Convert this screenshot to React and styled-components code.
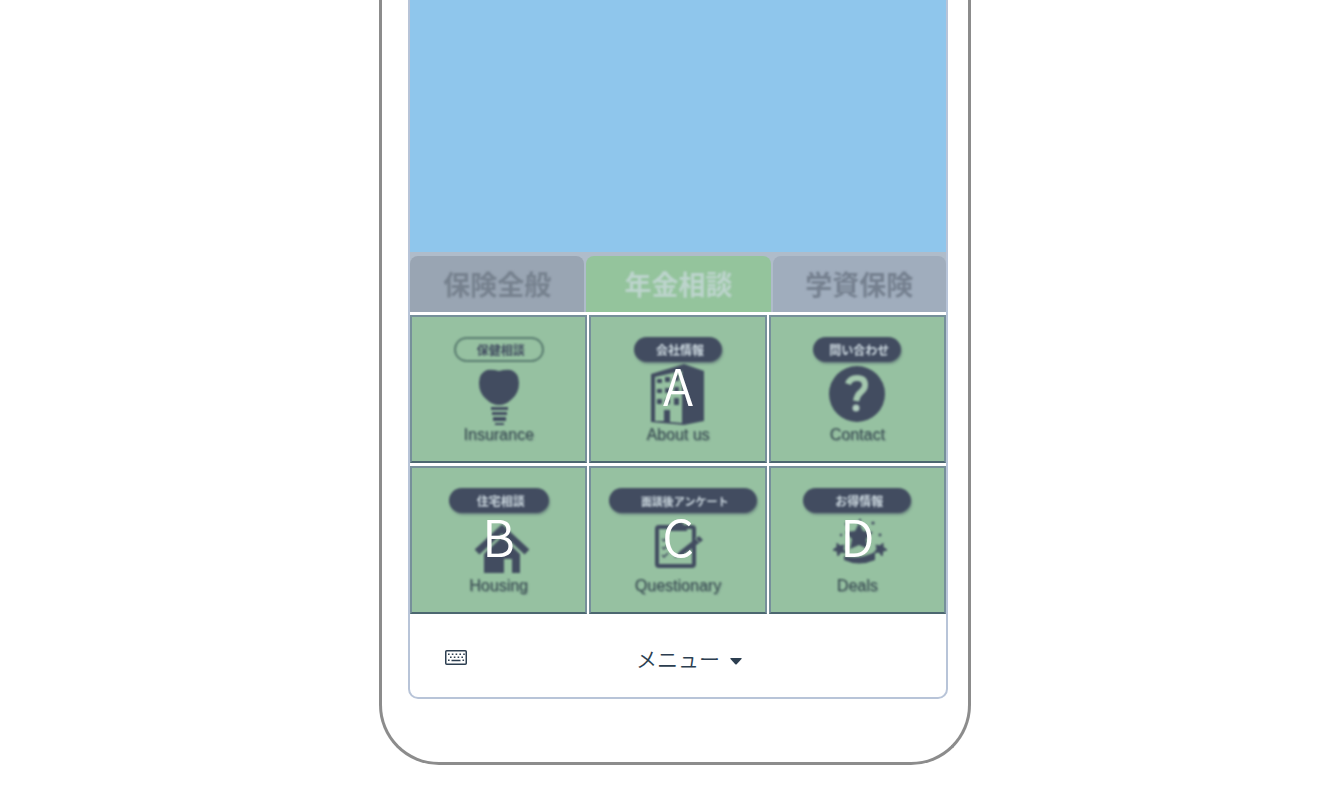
import React, { useState } from 'react';
import styled, { createGlobalStyle } from 'styled-components';

const ink = '#424c60';

const tabs = [
	{ id: 'general', label: '保険全般', bg: '#99a5b3', color: '#76818e' },
	{ id: 'pension', label: '年金相談', bg: '#94c49c', color: '#bdd4cd' },
	{ id: 'school', label: '学資保険', bg: '#a0adbd', color: '#75808f' },
];

const tiles = [
	{ id: 'insurance', tag: '保健相談', name: 'Insurance', icon: BulbIcon, width: 90, outlined: true },
	{ id: 'about', tag: '会社情報', name: 'About us', icon: BuildingIcon, width: 88, letter: 'A' },
	{ id: 'contact', tag: '問い合わせ', name: 'Contact', icon: QuestionIcon, width: 88 },
	{ id: 'housing', tag: '住宅相談', name: 'Housing', icon: HouseIcon, width: 100, letter: 'B' },
	{ id: 'questionary', tag: '面談後アンケート', name: 'Questionary', icon: ClipboardIcon, width: 148, wide: true, letter: 'C' },
	{ id: 'deals', tag: 'お得情報', name: 'Deals', icon: DealsIcon, width: 108, letter: 'D' },
];

const App = () => {
	const [active, setActive] = useState('pension');
	const [open, setOpen] = useState(true);

	return (
		<Page>
			<GlobalStyle />
			<Phone>
				<Screen>
					<Chat />
					{open && (
						<>
							<Tabs role="tablist">
								{tabs.map((tab) => (
									<Tab
										key={tab.id}
										type="button"
										role="tab"
										aria-selected={active === tab.id}
										onClick={() => setActive(tab.id)}
										$bg={tab.bg}
										$color={tab.color}
									>
										<Soft>{tab.label}</Soft>
									</Tab>
								))}
							</Tabs>
							<Tiles>
								{tiles.map(({ icon: Icon, ...tile }) => (
									<Tile key={tile.id} type="button">
										<Art>
											<Pill $width={tile.width} $outlined={tile.outlined} $wide={tile.wide}>
												{tile.tag}
											</Pill>
											<Icon />
											<Caption>{tile.name}</Caption>
										</Art>
										{tile.letter && <Letter>{tile.letter}</Letter>}
									</Tile>
								))}
							</Tiles>
						</>
					)}
					<Footer>
						<IconButton type="button" aria-label="キーボード">
							<KeyboardIcon />
						</IconButton>
						<MenuButton type="button" onClick={() => setOpen(!open)}>
							メニュー
							<Caret viewBox="0 0 12 7">
								<path d="M1 0h10q1.200 .2.500 1.100L6.700 6.200q-.7.600-1.400 0L.5 1.100Q-.2.200 1 0z" />
							</Caret>
						</MenuButton>
					</Footer>
				</Screen>
			</Phone>
		</Page>
	);
};

function BulbIcon() {
	return (
		<Drawing viewBox="0 0 64 62">
			<path d="M20 6q5-1 12 1q7-2 12-1q8 3 8 13q0 10-7 16q-6 6-13 6t-13-6q-7-6-7-16q0-10 8-13z" />
			<path d="M24 43h17v3H24zM25 48h15v3H25zM26 53h13v4H26zM28 59h9v2h-9z" />
		</Drawing>
	);
}

function BuildingIcon() {
	return (
		<Drawing viewBox="0 0 64 62">
			<path
				fillRule="evenodd"
				d="M5 10L38 0L58 7V57L38 61L5 58zM9 13V57H18V46H24V58L36 59V7z"
			/>
			<path d="M11 15h5v4h-5zM19 13h5v5h-5zM28 11h5v6h-5zM11 25h5v4h-5zM19 24h5v5h-5zM28 23h5v5h-5zM11 35h5v5h-5zM19 35h5v5h-5zM28 34h5v7h-5z" />
		</Drawing>
	);
}

function QuestionIcon() {
	return (
		<Drawing viewBox="0 0 64 62">
			<circle cx="32" cy="30" r="28" />
			<path d="M23 20q2-6 9-6q8 0 8 7q0 4-4 7t-5 9" fill="none" stroke="#a5c8af" strokeWidth="6" />
			<circle cx="31" cy="44" r="3.500" fill="#b2cdbf" />
		</Drawing>
	);
}

function HouseIcon() {
	return (
		<Drawing viewBox="0 0 64 62">
			<path d="M10 37L35 14L60 37" fill="none" stroke={ink} strokeWidth="7" />
			<path d="M17 39L35 22L53 39V58H45V44H37V58H17z" />
		</Drawing>
	);
}

function ClipboardIcon() {
	return (
		<Drawing viewBox="0 0 64 62">
			<rect x="11" y="12" width="37" height="39" rx="2" fill="none" stroke={ink} strokeWidth="4" />
			<path d="M24 10h4q1-3 5-3t5 3h3v6H24z" />
			<path d="M16 24l2 2l4-4M16 32l2 2l4-4M16 40l2 2l4-4" fill="none" stroke={ink} strokeWidth="1.500" />
			<path d="M28 43l6-7L53 21l4 4L37 40z" />
			<path d="M49 23l4 4" stroke="#96c1a1" strokeWidth="1" />
		</Drawing>
	);
}

function DealsIcon() {
	return (
		<Drawing viewBox="0 0 64 62">
			<path d="M34 8l4 8l10 1l-7 7l2 10l-9-4l-9 4l2-10l-7-7l10-1z" />
			<path d="M12 28l3 3l4-1l-1 4l3 4l-5-1l-3 4l-1-5l-4-1l4-3z" stroke={ink} strokeWidth="1" />
			<path d="M58 28l-3 3l-4-1l1 4l-3 4l5-1l3 4l1-5l4-1l-4-3z" stroke={ink} strokeWidth="1" />
			<path d="M19 41q15 4 31-4v8q-16 7-31 0z" />
			<circle cx="35" cy="5" r="1.200" />
			<circle cx="48" cy="8" r="1.600" />
			<circle cx="55" cy="20" r="1.400" />
			<circle cx="16" cy="20" r="1.200" />
			<circle cx="21" cy="9" r="1.200" />
		</Drawing>
	);
}

function KeyboardIcon() {
	return (
		<svg width="22" height="15" viewBox="0 0 22 15">
			<rect x="0.750" y="0.750" width="20.500" height="13.500" rx="1" fill="none" stroke="#2c3e50" strokeWidth="1.500" />
			<path
				d="M3 4.300h17M5 7.300h13M3 10.300h2M17.500 10.300h2"
				fill="none"
				stroke="#2c3e50"
				strokeWidth="1.600"
				strokeDasharray="1.600 2.200"
			/>
			<path d="M6.500 10.500h9" stroke="#2c3e50" strokeWidth="1.500" />
		</svg>
	);
}

const GlobalStyle = createGlobalStyle`
	body {
		margin: 0;
		background-color: #fff;
		font-family: 'Noto Sans CJK JP', sans-serif;
	}
	* {
		box-sizing: border-box;
	}
	button {
		border: none;
		background: none;
		padding: 0;
		cursor: pointer;
		font-family: inherit;
	}
`;

const Page = styled.main`
	display: flex;
	justify-content: center;
	padding-left: 10px;
`;

const Phone = styled.div`
	width: 100%;
	max-width: 592px;
	padding: 0 20px 63px 26px;
	border: 3px solid #8c8c8c;
	border-top: none;
	border-radius: 0 0 60px 60px;
`;

const Screen = styled.div`
	border: 2px solid #b8c4d8;
	border-top: none;
	border-radius: 0 0 10px 10px;
	overflow: hidden;
`;

const Chat = styled.div`
	height: 252px;
	background-color: #8fc6ec;
`;

const Tabs = styled.div`
	display: grid;
	grid-template-columns: 174fr 184fr 173fr;
	gap: 2px;
	height: 60px;
	padding-top: 4px;
	background-color: #afbcca;
`;

const Tab = styled.button`
	border-radius: 8px 8px 0 0;
	background-color: ${({ $bg }) => $bg};
	color: ${({ $color }) => $color};
	font-size: 27px;
	font-weight: 700;
	line-height: 28px;
`;

// the menu artwork is slightly soft, the letters over it stay sharp
const Soft = styled.span`
	display: block;
	filter: blur(1px);
`;

const Tiles = styled.div`
	display: grid;
	grid-template-columns: repeat(3, 1fr);
	gap: 3px 2px;
	padding-top: 3px;
`;

const Tile = styled.button`
	position: relative;
	display: flex;
	align-items: flex-start;
	height: 148px;
	padding-top: 20px;
	border: 2px solid #76909a;
	border-bottom-color: #4c6770;
	background-color: #96c1a1;
`;

const Art = styled.span`
	display: flex;
	flex: 1;
	flex-direction: column;
	align-items: center;
	padding: 0 8px;
	filter: blur(0.8px);
`;

const Pill = styled.span`
	align-self: ${({ $wide }) => ($wide ? 'flex-end' : 'center')};
	width: ${({ $width }) => $width}px;
	height: 25px;
	padding-left: 4px;
	border: 2px solid ${({ $outlined }) => ($outlined ? '#5a7c70' : ink)};
	border-radius: 13px;
	background-color: ${({ $outlined }) => ($outlined ? 'transparent' : ink)};
	box-shadow: ${({ $outlined }) => ($outlined ? 'none' : '1px 2px 2px rgba(66, 76, 96, 0.4)')};
	color: ${({ $outlined }) => ($outlined ? ink : '#cdd9e0')};
	font-size: ${({ $wide }) => ($wide ? 11 : 12)}px;
	font-weight: 700;
	line-height: 22px;
	text-align: center;
`;

const Drawing = styled.svg`
	width: 64px;
	height: 62px;
	margin-top: 2px;
	fill: ${ink};
`;

const Caption = styled.span`
	color: #3c5054;
	font-family: 'Liberation Sans', Arial, sans-serif;
	font-size: 16px;
	line-height: 18px;
	text-shadow: 1px 1px 1px rgba(66, 76, 96, 0.4);
`;

const Letter = styled.span`
	position: absolute;
	inset: 0;
	display: flex;
	justify-content: center;
	align-items: center;
	padding-bottom: 10px;
	color: #fff;
	font-family: 'Noto Sans CJK JP DemiLight', 'Noto Sans CJK JP', sans-serif;
	font-size: 50px;
	font-weight: 350;
	line-height: 50px;
`;

const Footer = styled.div`
	display: flex;
	align-items: center;
	height: 83px;
	padding: 4px 35px 0;
`;

const IconButton = styled.button`
	display: flex;
`;

const MenuButton = styled.button`
	display: flex;
	flex: 1;
	justify-content: center;
	align-items: center;
	gap: 10px;
	color: #2c3e50;
	font-family: 'Noto Sans CJK JP DemiLight', 'Noto Sans CJK JP', sans-serif;
	font-size: 21px;
	font-weight: 350;
	line-height: 30px;
`;

const Caret = styled.svg`
	width: 12px;
	height: 7px;
	margin-top: 8px;
	fill: #2c3e50;
`;

export default App;
